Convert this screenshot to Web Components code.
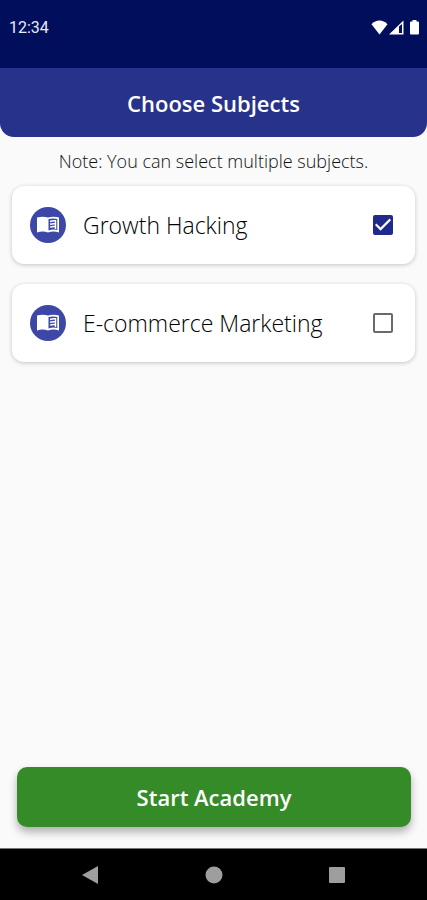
<!DOCTYPE html>
<html lang="en">
<head>
<meta charset="utf-8">
<meta name="viewport" content="width=device-width, initial-scale=1">
<title>Choose Subjects</title>
<style>
html, body { height: 100%; margin: 0; }
body { font-family: "Open Sans", "Noto Sans", sans-serif; background: #fafafa; }
</style>
</head>
<body>
<subject-screen></subject-screen>
<script>
const define = (name, html, setup) => {
  const template = document.createElement('template');
  template.innerHTML = html;
  customElements.define(name, class extends HTMLElement {
    constructor() {
      super();
      this.attachShadow({ mode: 'open' }).append(template.content.cloneNode(true));
    }
    connectedCallback() { if (setup) setup(this, this.shadowRoot); }
  });
};

define('status-bar', `
<style>
:host { display: flex; align-items: center; justify-content: space-between; height: 68px; padding: 0 6px 12px 9px; box-sizing: border-box; background: #000e5c; color: #e8eaf8; font: 400 16px/20px Roboto, sans-serif; }
svg { display: block; }
</style>
<span>12:34</span>
<svg width="50" height="16" viewBox="0 0 50 16" fill="#fff" aria-hidden="true">
  <path d="M.5 4.2C5-.6 12-.6 16.500 4.200L8.500 14.500z"/>
  <path fill-rule="evenodd" d="M18 14.500L32.500.500V14.500zM28 6.500V13H31V4z"/>
  <path d="M41.500 0h4v1.500h1.500q1 0 1 1V13.500q0 1-1 1h-7q-1 0-1-1v-11q0-1 1-1h1.500z"/>
</svg>`);

define('app-header', `
<style>
:host { display: flex; align-items: center; justify-content: center; height: 69px; background: #27338a; border-radius: 0 0 14px 14px; color: #fff; }
h1 { margin: 0; font-size: 22px; line-height: 30px; font-weight: 600; }
</style>
<h1><slot></slot></h1>`);

define('book-badge', `
<style>
:host { display: block; flex: none; width: 36px; height: 36px; }
svg { display: block; }
</style>
<svg width="36" height="36" viewBox="0 0 36 36" aria-hidden="true">
  <circle cx="18" cy="18" r="18" fill="#3d47a6"/>
  <path fill="#fff" fill-rule="evenodd" d="M7 10.500Q12.500 9 18 10.500Q23.500 9 29 10.500V25.500Q23.500 23.500 18 25.500Q12.500 23.500 7 25.500zM18.500 12V23.500Q23 22 27.300 23V12Q23 11 18.500 12z"/>
  <path fill="none" stroke="#fff" stroke-width="1.500" d="M20 14.500Q23 13.500 26 14M20 17.300Q23 16.300 26 16.800M20 20.100Q23 19.100 26 19.600M25.500 13V22"/>
</svg>`);

define('subject-card', `
<style>
:host { display: block; background: #fff; border-radius: 12px; box-shadow: 0 1px 4px rgba(0,0,0,.22); }
label { display: flex; align-items: center; height: 78px; padding: 0 22px 0 18px; gap: 17px; color: #000; font-size: 23px; line-height: 30px; font-weight: 300; }
input { appearance: none; flex: none; display: grid; width: 20px; height: 20px; margin: 0; border: 2px solid #6a6a6a; border-radius: 2px; background: #fff; }
.name { flex: 1; }
input:checked { border-color: #202a8b; background: #202a8b; }
input:checked::before { content: ""; background: #fff; clip-path: polygon(0 50%, 9% 40%, 35% 66%, 91% 10%, 100% 20%, 35% 86%); }
</style>
<label><book-badge></book-badge><span class="name"><slot></slot></span><input type="checkbox"></label>`,
(host, root) => { root.querySelector('input').checked = host.hasAttribute('checked'); });

define('primary-button', `
<style>
:host { display: block; }
button { display: block; width: 100%; height: 60px; padding: 0; border: 0; border-radius: 10px; background: #358b28; color: #fff; font: 600 22px/30px "Open Sans", "Noto Sans", sans-serif; box-shadow: 0 5px 9px rgba(0,0,0,.3); }
</style>
<button type="button"><slot></slot></button>`);

define('navigation-bar', `
<style>
:host { display: flex; justify-content: center; gap: 87px; height: 52px; box-sizing: border-box; border-top: 1px solid #777; background: #000; }
button { display: grid; place-items: center; width: 36px; padding: 0; border: 0; background: none; }
svg { display: block; }
</style>
<button type="button" aria-label="Back"><svg width="18" height="18" fill="#9e9e9e"><path d="M0 9L16 0V18z"/></svg></button>
<button type="button" aria-label="Home"><svg width="18" height="18" fill="#9e9e9e"><circle cx="9" cy="9" r="8.500"/></svg></button>
<button type="button" aria-label="Recent apps"><svg width="18" height="18" fill="#9e9e9e"><rect x="1" y="1" width="16" height="16" rx="1"/></svg></button>`);

define('subject-screen', `
<style>
:host { display: flex; flex-direction: column; min-height: 100%; background: #fafafa; }
main { flex: 1; display: flex; flex-direction: column; padding: 12px 12px 0; }
p { margin: 0 0 13px; text-align: center; color: #111; font-size: 18px; line-height: 24px; font-weight: 300; }
.list { display: grid; gap: 20px; }
footer { margin-top: auto; padding: 20px 4px 21px 5px; }
</style>
<status-bar></status-bar>
<app-header>Choose Subjects</app-header>
<main>
  <p>Note: You can select multiple subjects.</p>
  <div class="list">
    <subject-card checked>Growth Hacking</subject-card>
    <subject-card>E-commerce Marketing</subject-card>
  </div>
  <footer><primary-button>Start Academy</primary-button></footer>
</main>
<navigation-bar></navigation-bar>`);
</script>
</body>
</html>
